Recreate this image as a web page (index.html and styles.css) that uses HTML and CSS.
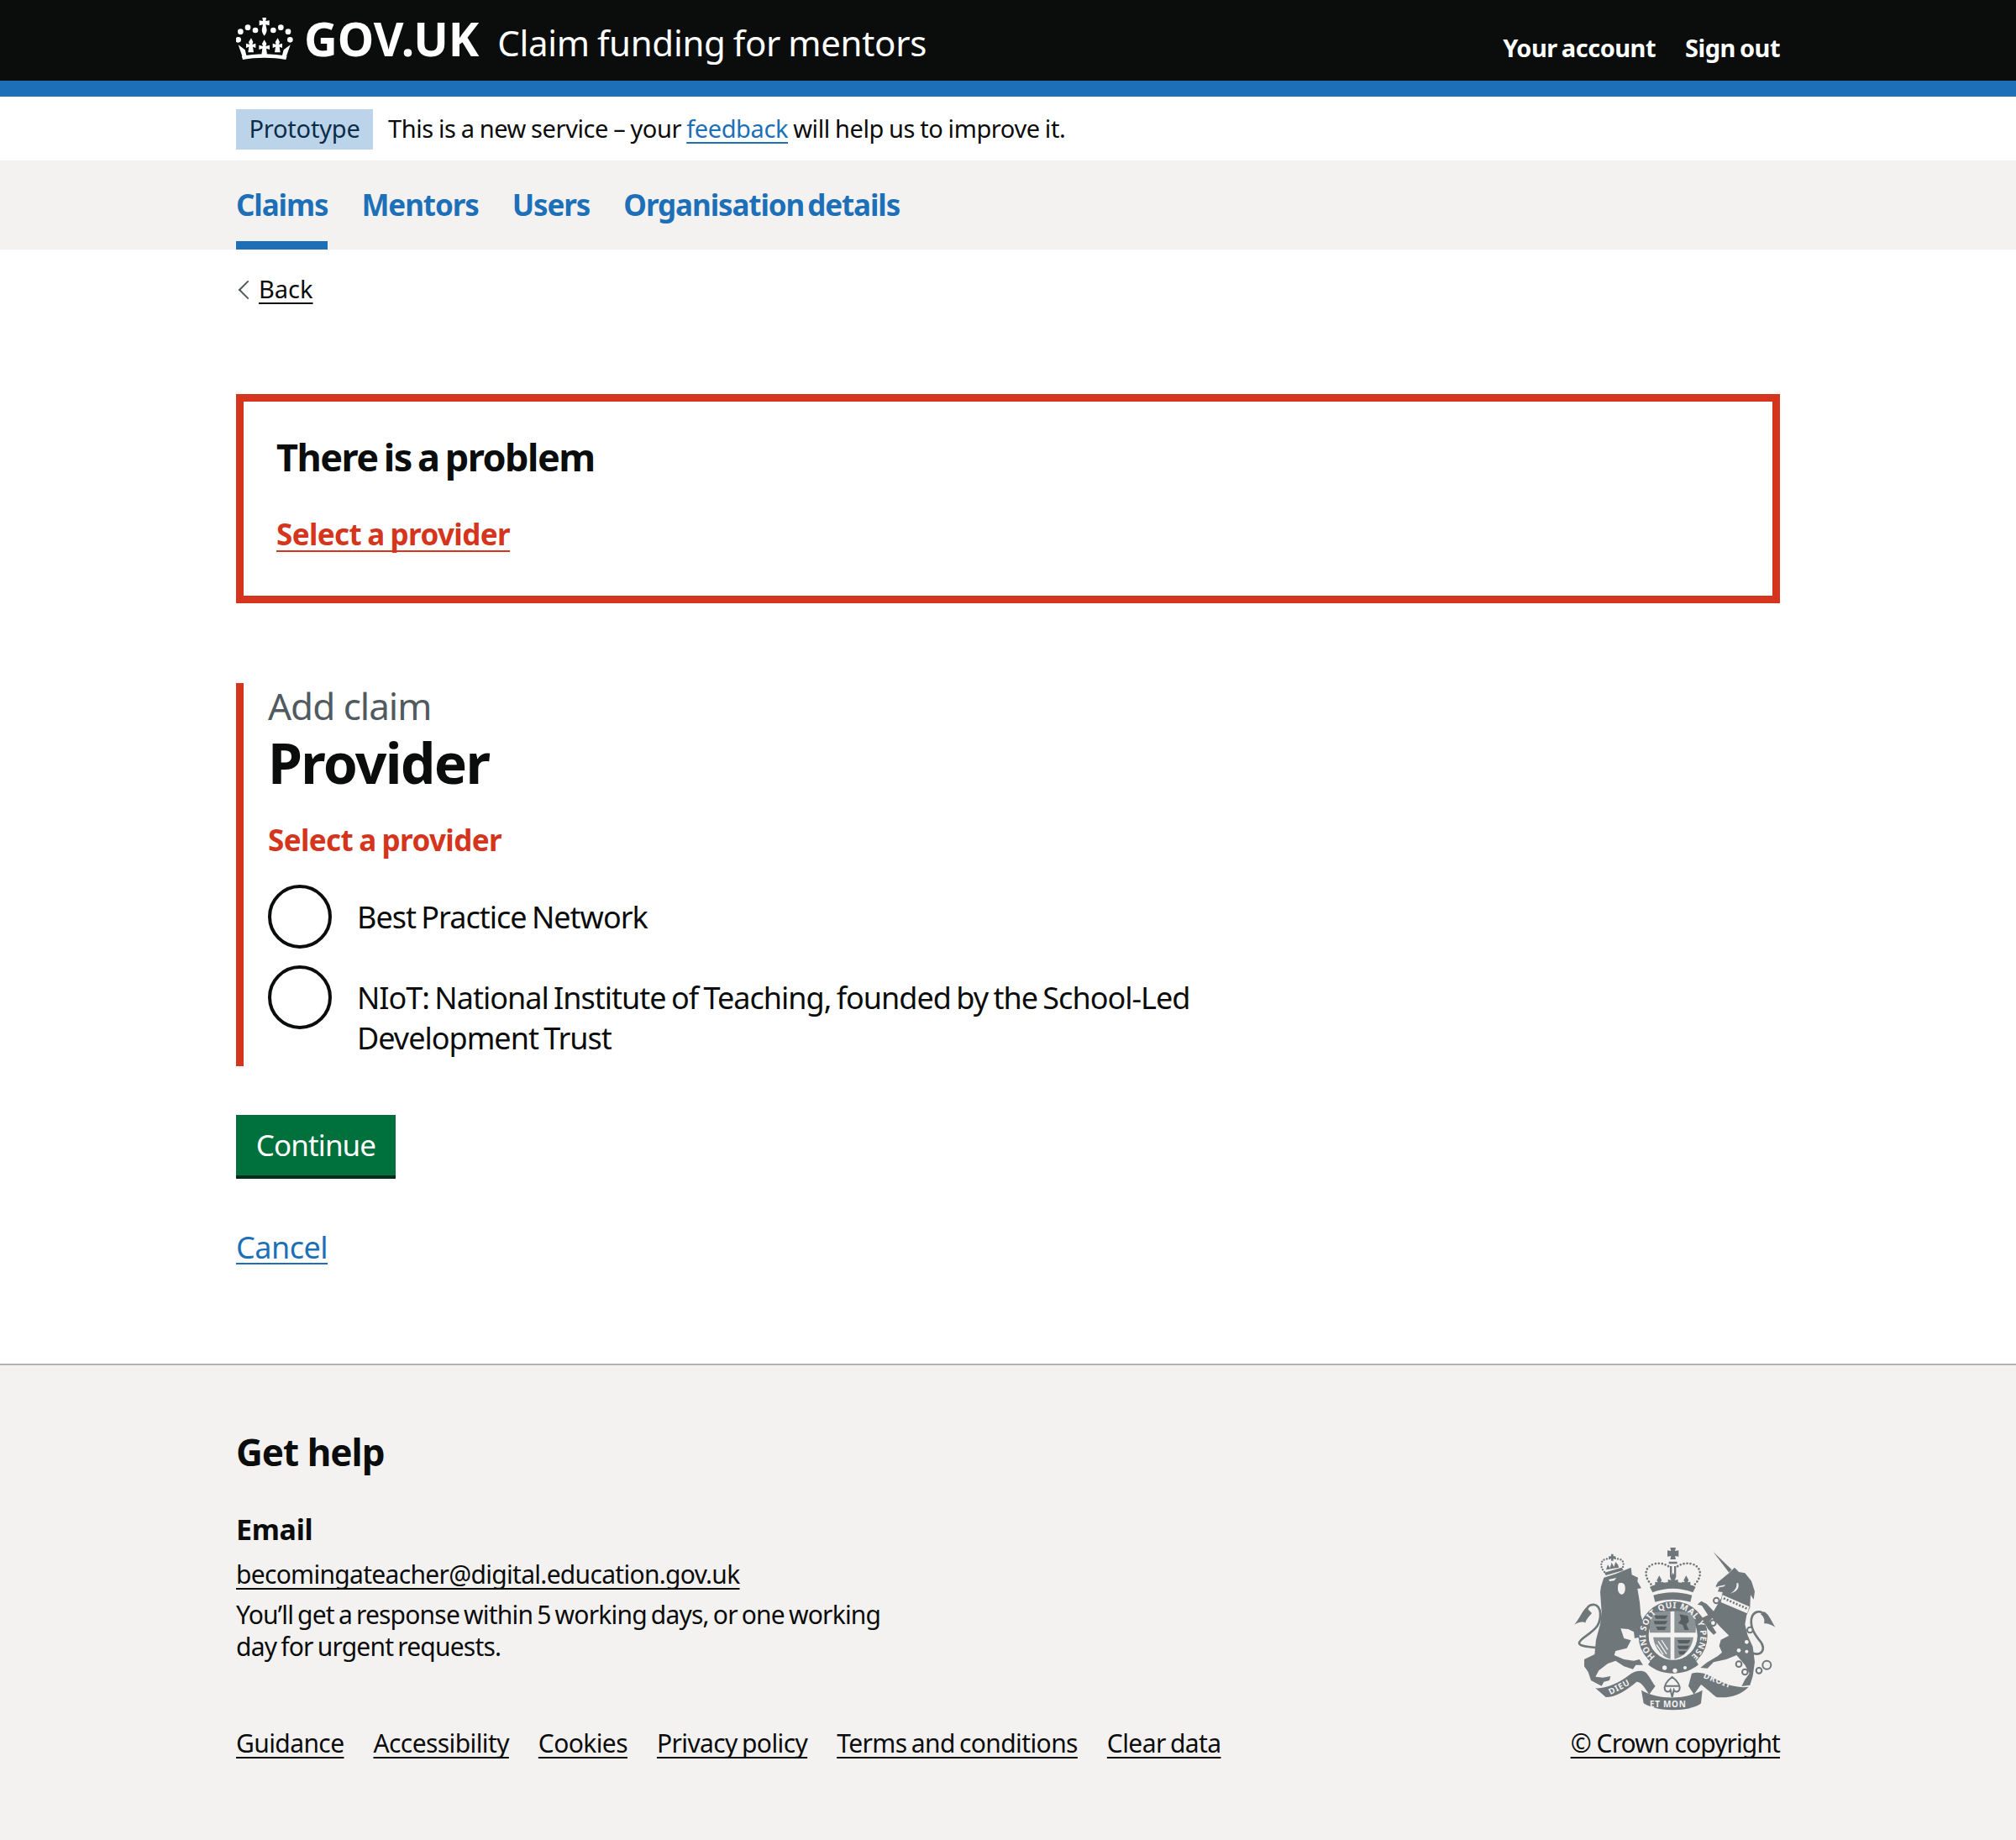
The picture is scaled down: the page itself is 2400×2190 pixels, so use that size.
FILE: index.html
```html
<!DOCTYPE html>
<html lang="en">
<head>
    <meta charset="UTF-8">
    <meta name="viewport" content="width=device-width, initial-scale=1.0">
    <title>Provider - Add claim - Claim funding for mentors</title>
    <link rel="stylesheet" href="styles.css">
</head>
<body>
    <header class="site-header">
        <div class="container header-inner">
            <a class="logo" href="#">
                <svg class="crown" viewBox="35 33 202 150" aria-hidden="true">
                    <g fill="#fff">
                        <circle cx="42" cy="112" r="10"/>
                        <circle cx="50" cy="83" r="10"/>
                        <circle cx="76" cy="68" r="10"/>
                        <circle cx="103" cy="78" r="10"/>
                        <circle cx="167" cy="78" r="10"/>
                        <circle cx="194" cy="68" r="10"/>
                        <circle cx="220" cy="83" r="10"/>
                        <circle cx="227" cy="112" r="10"/>
                        <path d="M128 33h14l-2 12 13-2v18l-13-3 3 14c2 8 0 16-8 26-8-10-10-18-8-26l3-14-13 3V43l13 2z"/>
                        <path d="M88 106l7 14-3 9 12-4v16l-10-4 3 20H77l3-20-10 4v-16l12 4-3-9z"/>
                        <path d="M135 112l8 14-3 9 14-4v16l-12-4 3 22h-20l3-22-12 4v-16l14 4-3-9z"/>
                        <path d="M183 106l7 14-3 9 12-4v16l-10-4 3 20h-20l3-20-10 4v-16l12 4-3-9z"/>
                        <path d="M42 130l24 18 6 24-14 4zM228 130l-24 18-6 24 14 4z"/>
                        <path d="M58 183c-1-4-2-8-4-13 52-10 110-10 162 0-2 5-3 9-4 13-50-9-104-9-154 0z"/>
                    </g>
                </svg>
                <span class="logo-text">GOV.UK</span>
            </a>
            <a class="service-name" href="#">Claim funding for mentors</a>
            <nav class="account-nav">
                <a href="#">Your account</a>
                <a href="#">Sign out</a>
            </nav>
        </div>
    </header>
    <div class="header-rule"></div>

    <div class="container phase-banner">
        <strong class="tag">Prototype</strong>
        <span class="phase-text">This is a new service – your <a href="#">feedback</a> will help us to improve it.</span>
    </div>

    <nav class="primary-nav">
        <ul class="container primary-list">
            <li class="primary-item active"><a href="#">Claims</a></li>
            <li class="primary-item"><a href="#">Mentors</a></li>
            <li class="primary-item"><a href="#">Users</a></li>
            <li class="primary-item"><a href="#">Organisation details</a></li>
        </ul>
    </nav>

    <div class="container">
        <a class="back-link" href="#">Back</a>

        <main class="main">
            <div class="error-summary">
                <h2 class="error-title">There is a problem</h2>
                <a class="error-link" href="#">Select a provider</a>
            </div>

            <form class="form-group">
                <span class="caption">Add claim</span>
                <h1 class="page-title">Provider</h1>
                <p class="error-message">Select a provider</p>
                <div class="radios">
                    <label class="radio-item">
                        <span class="radio-circle"></span>
                        <span class="radio-label">Best Practice Network</span>
                    </label>
                    <label class="radio-item">
                        <span class="radio-circle"></span>
                        <span class="radio-label">NIoT: National Institute of Teaching, founded by the School-Led Development Trust</span>
                    </label>
                </div>
            </form>

            <button class="button" type="button">Continue</button>
            <p class="cancel"><a href="#">Cancel</a></p>
        </main>
    </div>

    <footer class="site-footer">
        <div class="container">
            <h2 class="footer-title">Get help</h2>
            <div class="footer-row">
                <div class="footer-main">
                    <h3 class="footer-sub">Email</h3>
                    <a class="footer-mail" href="#">becomingateacher@digital.education.gov.uk</a>
                    <p class="footer-note">You’ll get a response within 5 working days, or one working day for urgent requests.</p>
                    <ul class="footer-links">
                        <li><a href="#">Guidance</a></li>
                        <li><a href="#">Accessibility</a></li>
                        <li><a href="#">Cookies</a></li>
                        <li><a href="#">Privacy policy</a></li>
                        <li><a href="#">Terms and conditions</a></li>
                        <li><a href="#">Clear data</a></li>
                    </ul>
                </div>
                <div class="footer-crest">
                    <svg class="crest" viewBox="0 0 747 630" aria-hidden="true">
                        <!-- lion -->
                        <g fill="#6f777b">
                            <path d="M118 128L160 115 215 92 218 118 240 128 238 142 252 166 238 168 246 215 250 262 262 300 262 340 250 352 240 342 228 345 225 322 205 312 178 310 190 345 215 352 200 380 160 390 155 405 190 420 225 425 245 420 258 440 232 440 222 455 190 445 160 425 132 435 100 460 88 482 115 485 142 480 138 495 118 500 110 515 90 505 72 495 62 465 48 445 48 420 85 402 90 350 105 295 110 250 105 180 108 160Z"/>
                            <path d="M55 235C40 250 30 275 13 296 30 285 45 285 52 290 55 275 68 265 75 255Z"/>
                            <path d="M120 110L182 92 188 102 125 120Z"/>
                            <path d="M126 100l6-18 8 12 6-20 8 16 6-18 8 10 4 10z"/>
                            <path d="M144 44h8v8h8v8h-8v8h-8v-8h-8v-8h8z"/>
                        </g>
                        <path d="M88 378C60 375 30 372 30 362 30 345 75 330 95 300 110 275 110 230 85 225 65 222 55 235 55 255" fill="none" stroke="#6f777b" stroke-width="8"/>
                        <path d="M120 108C104 90 105 66 125 62L148 58 172 62C192 65 192 88 180 98" fill="none" stroke="#6f777b" stroke-width="7" stroke-linecap="round" stroke-dasharray="0 10"/>
                        <g fill="#f3f2f1">
                            <path d="M135 135l28-6-8 10-16 2z"/>
                            <path d="M172 148c12-4 22 2 22 14 2 14-4 26-12 26s-14-10-14-20c0-6 0-14 4-20z"/>
                        </g>

                        <!-- unicorn -->
                        <g transform="translate(360 0)">
                            <g fill="#6f777b">
                                <path d="M148 35L215 100 205 110Z"/>
                                <path d="M205 112L225 92 240 108 262 112 285 140 297 178 293 206 282 190 280 235 268 262 262 295 272 335 290 375 297 430 290 480 280 512 250 516 262 492 278 470 262 440 232 405 195 420 150 430 128 452 103 450 125 432 165 408 180 395 170 372 176 350 205 335 175 305 145 272 135 285 160 325 150 332 130 312 108 272 130 262 108 228 92 224 106 212 125 222 150 248 178 200 182 180 165 178 170 165 157 160 165 145Z"/>
                                <path d="M330 250C345 255 355 280 370 305 355 295 340 290 330 292 335 275 325 265 318 258Z"/>
                            </g>
                            <path d="M290 398C322 408 335 385 320 360 300 335 280 310 285 275 290 250 315 240 335 262" fill="none" stroke="#6f777b" stroke-width="8"/>
                            <g fill="#f3f2f1">
                                <path d="M182 190L278 232 270 256 176 216Z"/>
                                <path d="M163 160l30-6-6 6-22 4z"/>
                                <path d="M238 148c4 16-2 30-30 38 18-10 26-22 24-38z"/>
                                <circle cx="268" cy="358" r="7"/>
                                <circle cx="240" cy="388" r="7"/>
                                <circle cx="268" cy="392" r="6"/>
                            </g>
                            <path d="M186 202l86 38" fill="none" stroke="#6f777b" stroke-width="8" stroke-dasharray="6 6"/>
                            <g fill="#f3f2f1" stroke="#6f777b" stroke-width="6">
                                <circle cx="160" cy="210" r="10"/>
                                <circle cx="148" cy="290" r="10"/>
                                <circle cx="280" cy="315" r="10"/>
                                <circle cx="240" cy="437" r="10"/>
                                <circle cx="262" cy="465" r="10"/>
                                <circle cx="312" cy="460" r="10"/>
                                <circle cx="340" cy="440" r="15"/>
                            </g>
                        </g>

                        <!-- crown, shield and motto -->
                        <g transform="translate(-90 -45)">
                            <g fill="#6f777b">
                                <path d="M445 66h20l-3 12 13-2v22l-13-2 3 12h-20l3-12-13 2V76l13 2z"/>
                                <path d="M440 116h30v8h-30zM444 132h7v40h-7zM459 132h7v40h-7z"/>
                                <path d="M372 206c52-24 112-24 164 0l-10 20c-46-18-98-18-144 0z"/>
                                <path d="M406 166l9 16-4 8 10-2v14h-30v-14l10 2-4-8zM455 156l10 18-4 8 12-2v18h-36v-18l12 2-4-8zM502 166l9 16-4 8 10-2v14h-30v-14l10 2-4-8z"/>
                                <path d="M385 236c44-14 94-14 138 0l-6 24c-40-12-86-12-126 0z"/>
                            </g>
                            <path d="M385 205C355 180 345 140 385 125 410 118 430 125 446 138M525 205C555 180 565 140 525 125 500 118 480 125 464 138" fill="none" stroke="#6f777b" stroke-width="8" stroke-linecap="round" stroke-dasharray="0 12"/>

                            <circle cx="455" cy="380" r="105" fill="none" stroke="#6f777b" stroke-width="36"/>
                            <circle cx="455" cy="380" r="86" fill="#f3f2f1"/>
                            <g fill="#8b9296">
                                <path d="M372 370c-2-30 2-52 14-72l60-6v78z"/>
                                <path d="M460 292l62 6c12 20 16 42 14 72h-76z"/>
                                <path d="M384 386h62v78c-26-6-54-30-62-78z"/>
                                <path d="M460 386h68c-6 44-36 70-68 78z"/>
                            </g>
                            <g fill="#565e62">
                                <path d="M388 308h48l-8 12h-34zM386 328h50l-8 12h-38zM394 348h38l-6 12h-26z"/>
                                <path d="M478 304l30 6 4 20-10 10 10 20h-16l-6-18-16-6 10-14z"/>
                                <path d="M470 396h48l-8 12h-34zM470 416h44l-8 12h-30zM474 436h28l-8 12h-16z"/>
                            </g>
                            <path d="M402 400l30 46M414 396l22 34M396 412l24 36" fill="none" stroke="#f3f2f1" stroke-width="4"/>

                            <g fill="#6f777b">
                                <path d="M376 468c50 34 110 34 160 0l10 16c-50 42-130 42-180 0z"/>
                            </g>
                            <g fill="#f3f2f1">
                                <circle cx="425" cy="495" r="8"/>
                                <circle cx="462" cy="505" r="8"/>
                                <circle cx="498" cy="495" r="6"/>
                            </g>

                            <g fill="#6f777b">
                                <path d="M178 568C220 570 265 548 300 520 320 505 345 503 358 512 375 530 385 555 392 560L370 590C350 560 340 545 325 545 290 575 250 600 215 600Z"/>
                                <path d="M342 575C400 610 500 610 560 575L555 622C520 652 400 655 350 622Z"/>
                                <path d="M522 515C540 510 565 512 590 525 630 550 680 570 725 563 700 590 660 605 610 600 590 585 570 565 555 555L530 590 510 560Z"/>
                            </g>
                            <path d="M452 528c22 16 30 30 26 46-6 10-16 8-20 0l-6 26-6-26c-4 8-14 10-20 0-4-16 4-30 26-46zM426 560h52" fill="#f3f2f1" stroke="#6f777b" stroke-width="6"/>

                            <g class="crest-text">
                                <path id="garter" d="M392 455A98 98 0 1 1 518 455" fill="none"/>
                                <text><textPath href="#garter">HONI SOIT QUI MAL Y PENSE</textPath></text>
                                <text x="232" y="592" transform="rotate(-28 232 592)">DIEU</text>
                                <text x="372" y="636">ET MON</text>
                                <text x="562" y="530" transform="rotate(22 562 530)">DROIT</text>
                            </g>
                        </g>
                    </svg>
                    <a class="copyright" href="#">© Crown copyright</a>
                </div>
            </div>
        </div>
    </footer>
</body>
</html>
```

FILE: styles.css
```css
* {
    box-sizing: border-box;
}
body {
    margin: 0;
    font-family: "Noto Sans", Arial, sans-serif;
    font-size: 36px;
    line-height: 48px;
    color: #0b0c0c;
    background-color: #fff;
}
a {
    color: inherit;
    text-decoration-thickness: 2px;
    text-underline-offset: 5px;
    text-decoration-skip-ink: none;
}
h1, h2, h3, p, ul {
    margin: 0;
    padding: 0;
}
ul {
    list-style: none;
}
.container {
    width: 1838px;
    margin-left: auto;
    margin-right: auto;
}

/* Header */
.site-header {
    height: 96px;
    background-color: #0b0c0c;
    color: #fff;
}
.header-inner {
    display: flex;
    align-items: flex-start;
    height: 96px;
}
.header-rule {
    height: 19px;
    background-color: #1d70b8;
}
.logo {
    display: flex;
    align-items: flex-start;
    color: #fff;
    text-decoration: none;
}
.crown {
    width: 68px;
    height: 50px;
    margin-top: 21px;
}
.logo-text {
    margin-left: 13px;
    font-size: 55px;
    font-weight: 700;
    line-height: 92px;
}
.service-name {
    margin-left: 22px;
    margin-top: 3px;
    font-size: 42px;
    line-height: 96px;
    color: #fff;
    text-decoration: none;
    letter-spacing: -0.3px;
    word-spacing: -1.5px;
}
.account-nav {
    display: flex;
    gap: 35px;
    margin-left: auto;
    margin-top: 9px;
    font-size: 29px;
    font-weight: 700;
    line-height: 96px;
    letter-spacing: -0.5px;
    word-spacing: -2px;
}
.account-nav a {
    color: #fff;
    text-decoration: none;
}

/* Phase banner */
.phase-banner {
    display: flex;
    align-items: flex-start;
    height: 76px;
    padding-top: 15px;
    font-size: 29px;
}
.tag {
    width: 163px;
    height: 48px;
    font-weight: 400;
    line-height: 46px;
    letter-spacing: -0.2px;
    text-align: center;
    color: #0c2d4a;
    background-color: #bbd4ea;
}
.phase-text {
    margin-left: 18px;
    line-height: 46px;
    letter-spacing: -0.4px;
    word-spacing: -1px;
}
.phase-text a {
    color: #1d70b8;
}

/* Primary navigation */
.primary-nav {
    height: 106px;
    background-color: #f3f2f1;
}
.primary-list {
    display: flex;
    gap: 40px;
}
.primary-item {
    height: 106px;
    font-size: 35px;
    font-weight: 700;
    line-height: 106px;
    letter-spacing: -1.1px;
    word-spacing: -4px;
}
.primary-item a {
    color: #1d70b8;
    text-decoration: none;
}
.primary-item.active {
    border-bottom: 10px solid #1d70b8;
}

/* Back link */
.back-link {
    display: block;
    position: relative;
    width: fit-content;
    margin-top: 27px;
    padding-left: 27px;
    font-size: 29px;
    line-height: 40px;
}
.back-link::before {
    content: "";
    position: absolute;
    left: 6px;
    top: 13px;
    width: 14px;
    height: 14px;
    border-left: 2px solid #505a5f;
    border-bottom: 2px solid #505a5f;
    transform: rotate(45deg);
}

/* Error summary */
.main {
    padding-top: 105px;
}
.error-summary {
    height: 249px;
    padding: 36px 39px 0;
    border: 9px solid #d4351c;
}
.error-title {
    font-size: 45px;
    font-weight: 700;
    line-height: 60px;
    letter-spacing: -1.5px;
    word-spacing: -3px;
}
.error-link {
    display: inline-block;
    margin-top: 38px;
    font-size: 35px;
    font-weight: 700;
    line-height: 48px;
    letter-spacing: -0.6px;
    word-spacing: -1.5px;
    color: #d4351c;
    text-underline-offset: 6px;
}

/* Form */
.form-group {
    margin-top: 95px;
    padding-left: 29px;
    padding-bottom: 9px;
    border-left: 9px solid #d4351c;
}
.caption {
    display: block;
    font-size: 44px;
    line-height: 54px;
    letter-spacing: -1px;
    color: #505a5f;
}
.page-title {
    font-size: 66px;
    font-weight: 700;
    line-height: 80px;
    letter-spacing: -1.75px;
}
.error-message {
    margin-top: 29px;
    font-size: 35px;
    font-weight: 700;
    line-height: 48px;
    letter-spacing: -0.6px;
    word-spacing: -1.5px;
    color: #d4351c;
}
.radios {
    margin-top: 29px;
}
.radio-item {
    display: flex;
    margin-bottom: 20px;
}
.radio-item:last-child {
    margin-bottom: 0;
}
.radio-circle {
    flex: none;
    width: 76px;
    height: 76px;
    border: 4px solid #0b0c0c;
    border-radius: 50%;
}
.radio-label {
    width: 1040px;
    margin-left: 30px;
    padding-top: 15px;
    letter-spacing: -1px;
    word-spacing: -2px;
}
.button {
    display: block;
    width: 190px;
    height: 72px;
    margin-top: 58px;
    padding: 0;
    font-family: inherit;
    font-size: 35px;
    line-height: 72px;
    letter-spacing: -0.9px;
    color: #fff;
    background-color: #00703c;
    border: none;
    box-shadow: 0 4px 0 #002d18;
    cursor: pointer;
}
.cancel {
    margin-top: 62px;
    letter-spacing: -0.5px;
}
.cancel a {
    color: #1d70b8;
}

/* Footer */
.site-footer {
    height: 567px;
    margin-top: 114px;
    background-color: #f3f2f1;
    border-top: 2px solid #b1b4b6;
}
.footer-title {
    padding-top: 73px;
    font-size: 44px;
    font-weight: 700;
    line-height: 60px;
    letter-spacing: -1px;
}
.footer-row {
    display: flex;
    justify-content: space-between;
    align-items: flex-end;
}
.footer-sub {
    margin-top: 38px;
    font-size: 34px;
    font-weight: 700;
    line-height: 48px;
    letter-spacing: -0.3px;
}
.footer-mail {
    display: inline-block;
    margin-top: 6px;
    font-size: 30px;
    line-height: 48px;
    letter-spacing: -0.7px;
}
.footer-note {
    width: 800px;
    margin-top: 5px;
    font-size: 30px;
    line-height: 38px;
    letter-spacing: -0.8px;
    word-spacing: -2px;
}
.footer-links {
    display: flex;
    gap: 35px;
    margin-top: 77px;
    font-size: 30px;
    line-height: 38px;
    letter-spacing: -0.6px;
    word-spacing: -2px;
}
.footer-crest {
    display: flex;
    flex-direction: column;
    align-items: flex-end;
}
.crest {
    width: 249px;
    height: 210px;
}
.crest-text {
    font-size: 30px;
    font-weight: 700;
    letter-spacing: 2px;
    fill: #f3f2f1;
}
.copyright {
    margin-top: 11px;
    font-size: 30px;
    line-height: 38px;
    letter-spacing: -0.9px;
}
```
